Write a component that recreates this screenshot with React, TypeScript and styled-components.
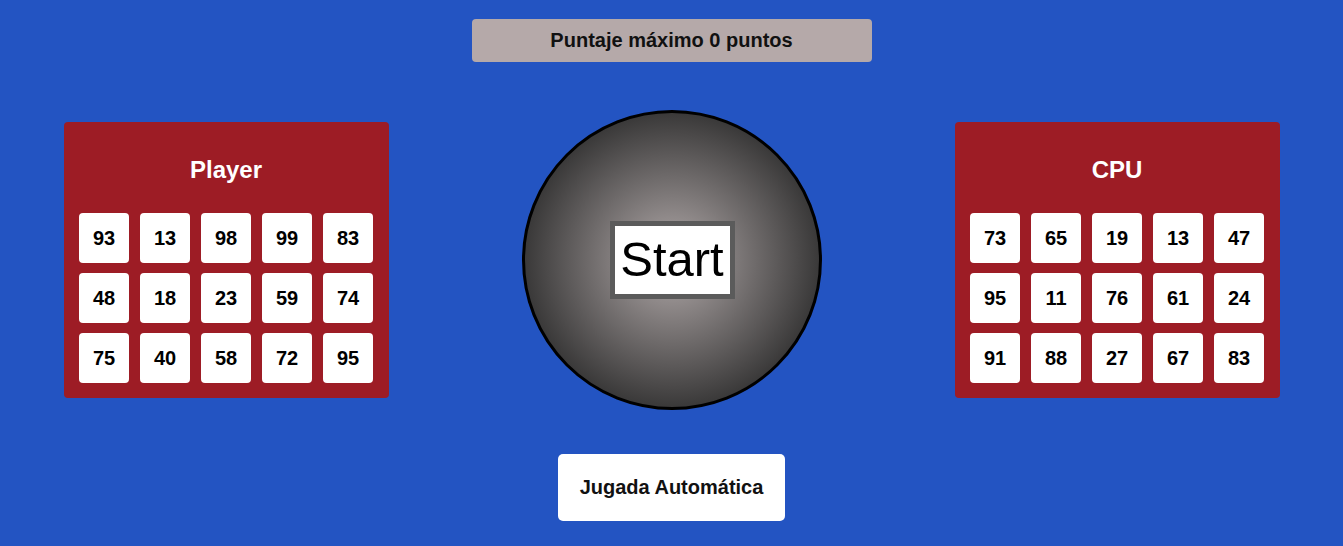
import React from "react";
import styled, { createGlobalStyle } from "styled-components";

const Global = createGlobalStyle`
  html, body { margin: 0; padding: 0; }
  body {
    background: #2354c2;
    font-family: "Liberation Sans", Arial, sans-serif;
    height: 546px;
    overflow: hidden;
  }
`;

const Page = styled.div`
  display: flex;
  flex-direction: column;
  align-items: center;
  padding-top: 19px;
`;

const ScoreBar = styled.div`
  width: 400px;
  height: 43px;
  box-sizing: border-box;
  background: #b5a9a9;
  border-radius: 4px;
  display: flex;
  align-items: center;
  justify-content: center;
  font-weight: bold;
  font-size: 20px;
  color: #111;
`;

const Board = styled.div`
  align-self: stretch;
  display: flex;
  justify-content: space-between;
  align-items: center;
  padding: 0 63px 0 64px;
  margin-top: 48px;
`;

const Panel = styled.div`
  width: 325px;
  height: 276px;
  box-sizing: border-box;
  background: #9d1c25;
  border-radius: 4px;
  padding: 0 16px 15px 15px;
  display: flex;
  flex-direction: column;
`;

const PanelTitle = styled.h2`
  margin: 0;
  height: 91px;
  display: flex;
  align-items: center;
  justify-content: center;
  color: #fff;
  font-size: 24px;
  font-weight: bold;
  padding-top: 4px;
  box-sizing: border-box;
`;

const Grid = styled.div`
  display: grid;
  grid-template-columns: repeat(5, 50px);
  grid-auto-rows: 50px;
  column-gap: 11px;
  row-gap: 10px;
`;

const Cell = styled.div`
  background: #fff;
  border-radius: 4px;
  display: flex;
  align-items: center;
  justify-content: center;
  font-size: 20px;
  font-weight: bold;
  color: #000;
`;

const Globe = styled.div`
  width: 300px;
  height: 300px;
  box-sizing: border-box;
  border: 3px solid #000;
  border-radius: 50%;
  background: radial-gradient(circle closest-side at 50% 50%, #b3abab 0%, #3a3939 100%);
  display: flex;
  align-items: center;
  justify-content: center;
`;

const StartButton = styled.button`
  width: 125px;
  height: 78px;
  box-sizing: border-box;
  border: 5px solid #5b5b5b;
  background: #fff;
  font-family: "Liberation Sans", Arial, sans-serif;
  font-size: 49px;
  color: #000;
  padding: 0 0 2px 0;
  display: flex;
  align-items: center;
  justify-content: center;
  cursor: pointer;
`;

const AutoButton = styled.button`
  margin-top: 44px;
  width: 227px;
  height: 67px;
  border: none;
  border-radius: 5px;
  background: #fff;
  font-family: "Liberation Sans", Arial, sans-serif;
  font-size: 20px;
  font-weight: bold;
  color: #111;
  cursor: pointer;
`;

const player = [93, 13, 98, 99, 83, 48, 18, 23, 59, 74, 75, 40, 58, 72, 95];
const cpu = [73, 65, 19, 13, 47, 95, 11, 76, 61, 24, 91, 88, 27, 67, 83];

const Card = ({ title, nums }: { title: string; nums: number[] }) => (
  <Panel>
    <PanelTitle>{title}</PanelTitle>
    <Grid>
      {nums.map((n, i) => (
        <Cell key={i}>{n}</Cell>
      ))}
    </Grid>
  </Panel>
);

export default function App() {
  return (
    <>
      <Global />
      <Page>
        <ScoreBar>Puntaje máximo 0 puntos</ScoreBar>
        <Board>
          <Card title="Player" nums={player} />
          <Globe>
            <StartButton>Start</StartButton>
          </Globe>
          <Card title="CPU" nums={cpu} />
        </Board>
        <AutoButton>Jugada Automática</AutoButton>
      </Page>
    </>
  );
}
